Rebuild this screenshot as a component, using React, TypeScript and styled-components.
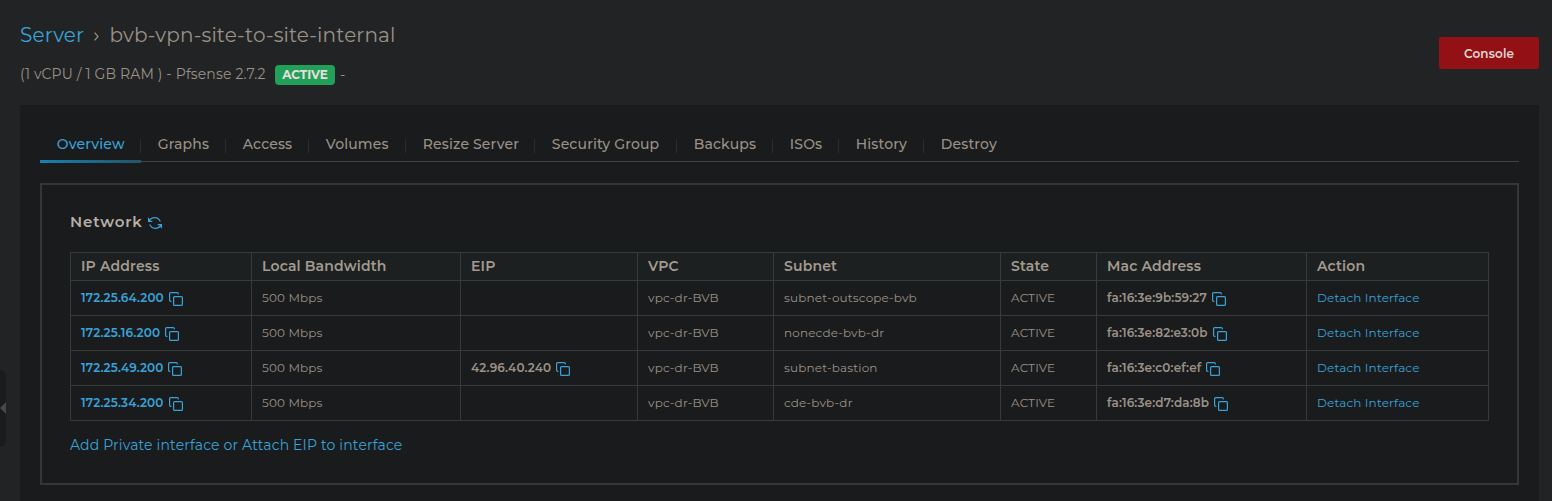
import React from 'react';
import styled, { createGlobalStyle } from 'styled-components';

const blue = '#38a3d8';

const Global = createGlobalStyle`
  * { box-sizing: border-box; }
  html, body { margin: 0; background: #222325; }
  body { font-family: Montserrat, Inter, sans-serif; color: #9b9287; overflow: hidden; }
`;
const Text = styled.span<{ $ls?: number }>`
  white-space: nowrap;
  letter-spacing: ${p => p.$ls ?? 0.15}px;
`;
const Page = styled.div`
  position: relative;
  height: 501px;
  padding: 0 13px 0 20px;
  display: flex;
  flex-direction: column;
  overflow: hidden;
`;
const Header = styled.header`
  height: 105px;
  flex: none;
  display: flex;
  justify-content: space-between;
`;
const Crumbs = styled.div`
  margin-top: 21px;
  height: 28px;
  display: flex;
  align-items: center;
  font-size: 20px;
  font-weight: 400;
`;
const CrumbLink = styled.a`width: 64px; color: ${blue};`;
const CrumbArrow = styled.svg`margin: 3px 10.5px 0 10px;`;
const Specs = styled.div`
  margin-top: 16px;
  height: 20px;
  display: flex;
  align-items: center;
  font-size: 14px;
`;
const SpecText = styled.div`width: 255px; margin-top: -2px;`;
const Badge = styled.span`
  width: 60px;
  height: 20px;
  margin-right: 5px;
  border-radius: 4px;
  background: #229f58;
  color: #e3e0dc;
  font-size: 12px;
  font-weight: 700;
  line-height: 20px;
  text-align: center;
`;
const ConsoleButton = styled.button`
  margin-top: 37px;
  width: 100px;
  height: 32px;
  padding: 0;
  border: 0;
  border-radius: 2px;
  background: #931114;
  color: #e0d6d3;
  font: 600 12px Montserrat, Inter, sans-serif;
`;
const Panel = styled.main`
  flex: 1;
  background: #1a1b1d;
  padding: 22px 20px 0;
`;
const Tabs = styled.nav`
  display: flex;
  height: 35px;
  border-bottom: 1px solid #414345;
`;
const Tab = styled.a<{ $w: number; $active?: boolean }>`
  position: relative;
  width: ${p => p.$w}px;
  height: 34px;
  padding-left: 16.8px;
  font-size: 14px;
  font-weight: 500;
  line-height: 34px;
  color: ${p => (p.$active ? blue : '#9b9287')};
  &:not(:last-child)::before {
    content: '';
    position: absolute;
    right: 0;
    top: 12px;
    width: 1px;
    height: 14px;
    background: #2b2c2e;
  }
  ${p => p.$active && `&::after {
    content: '';
    position: absolute;
    left: 0;
    top: 33px;
    width: 101px;
    height: 3px;
    background: linear-gradient(90deg, #1681b3, #245567);
  }`}
`;
const Card = styled.section`
  margin-top: 21px;
  height: 302px;
  border: 2px solid #353638;
  padding: 25px 28px 0;
`;
const CardTitle = styled.h2`
  display: flex;
  align-items: center;
  height: 22px;
  margin: 0 0 20px;
  font-size: 15px;
  font-weight: 600;
  color: #b8b1a8;
  svg { margin: 4px 0 0 0; }
`;
const TitleText = styled.span`width: 78px;`;
const Table = styled.table`
  width: 1418px;
  table-layout: fixed;
  border-collapse: collapse;
  th, td { border: 1px solid #363b3b; padding: 0 0 0 10px; text-align: left; }
  th { height: 28px; padding-bottom: 2px; background: #1c2020; font-size: 14px; font-weight: 600; color: #a39b90; line-height: 20px; }
  td { height: 35px; font-size: 12px; line-height: 20px; }
`;
const Cell = styled.div<{ $strong?: boolean; $link?: boolean }>`
  display: flex;
  align-items: center;
  gap: 5px;
  font-weight: ${p => (p.$strong ? 600 : 400)};
  color: ${p => (p.$link ? blue : '#9b9287')};
  svg { margin-top: 2px; }
`;
const AddLink = styled.a`
  display: block;
  margin-top: 14px;
  font-size: 14px;
  line-height: 20px;
  color: ${blue};
`;
const Handle = styled.div`
  position: absolute;
  left: 0;
  top: 370px;
  width: 6px;
  height: 77px;
  border-radius: 0 6px 6px 0;
  background: #1a1b1d;
  display: flex;
  align-items: center;
  padding-bottom: 1px;
`;

const Copy = () => (
  <svg width="14" height="14" viewBox="0 0 14 14" fill="none" stroke={blue} strokeWidth="1.2" strokeLinecap="round">
    <rect x="4.6" y="4.6" width="8.800" height="8.800" rx="1" />
    <path d="M2 9.300H1.600A1 1 0 0 1 .6 8.300V1.600A1 1 0 0 1 1.600.6h6.700a1 1 0 0 1 1 1V2" />
  </svg>
);
const Refresh = () => (
  <svg width="14" height="14" viewBox="0 0 14 14" fill="none" stroke={blue} strokeWidth="1.2">
    <path d="M.6 1.700v3.700h3.700M1 5.100C3.500.4 10.300.5 12.300 5.600M13.400 12.300V8.600H9.700M13 8.900C10.500 13.600 3.700 13.500 1.700 8.400" />
  </svg>
);

const tabs: [string, number][] = [
  ['Overview', 101], ['Graphs', 85], ['Access', 83], ['Volumes', 97], ['Resize Server', 129],
  ['Security Group', 142], ['Backups', 96], ['ISOs', 66], ['History', 85], ['Destroy', 90],
];
const cols: [string, number][] = [
  ['IP Address', 181], ['Local Bandwidth', 209], ['EIP', 177], ['VPC', 136],
  ['Subnet', 227], ['State', 96], ['Mac Address', 210], ['Action', 182],
];
const rows = [
  ['172.25.64.200', '', 'subnet-outscope-bvb', 'fa:16:3e:9b:59:27'],
  ['172.25.16.200', '', 'nonecde-bvb-dr', 'fa:16:3e:82:e3:0b'],
  ['172.25.49.200', '42.96.40.240', 'subnet-bastion', 'fa:16:3e:c0:ef:ef'],
  ['172.25.34.200', '', 'cde-bvb-dr', 'fa:16:3e:d7:da:8b'],
];

export default function App() {
  return (
    <>
      <Global />
      <Page>
        <Header>
          <div>
            <Crumbs>
              <CrumbLink><Text>Server</Text></CrumbLink>
              <CrumbArrow width="5" height="9" viewBox="0 0 5 9" fill="none" stroke="#9b9287" strokeWidth="1.2"><path d="M.6.700 4 4.500.6 8.300" /></CrumbArrow>
              <Text>bvb-vpn-site-to-site-internal</Text>
            </Crumbs>
            <Specs>
              <SpecText><Text>(1 vCPU / 1 GB RAM ) - Pfsense 2.7.2</Text></SpecText>
              <Badge><Text $ls={0}>ACTIVE</Text></Badge>
              <Text>-</Text>
            </Specs>
          </div>
          <ConsoleButton><Text>Console</Text></ConsoleButton>
        </Header>
        <Panel>
          <Tabs>
            {tabs.map(([t, w], i) => <Tab key={t} $w={w} $active={i === 0}><Text>{t}</Text></Tab>)}
          </Tabs>
          <Card>
            <CardTitle><TitleText><Text $ls={0.85}>Network</Text></TitleText><Refresh /></CardTitle>
            <Table>
              <colgroup>{cols.map(([n, w]) => <col key={n} width={w} />)}</colgroup>
              <thead><tr>{cols.map(([n]) => <th key={n}><Text>{n}</Text></th>)}</tr></thead>
              <tbody>
                {rows.map(([ip, eip, subnet, mac]) => (
                  <tr key={ip}>
                    <td><Cell $strong $link><Text>{ip}</Text><Copy /></Cell></td>
                    <td><Cell><Text>500 Mbps</Text></Cell></td>
                    <td>{eip && <Cell $strong><Text>{eip}</Text><Copy /></Cell>}</td>
                    <td><Cell><Text>vpc-dr-BVB</Text></Cell></td>
                    <td><Cell><Text>{subnet}</Text></Cell></td>
                    <td><Cell><Text>ACTIVE</Text></Cell></td>
                    <td><Cell $strong><Text>{mac}</Text><Copy /></Cell></td>
                    <td><Cell $link><Text>Detach Interface</Text></Cell></td>
                  </tr>
                ))}
              </tbody>
            </Table>
            <AddLink><Text>Add Private interface or Attach EIP to interface</Text></AddLink>
          </Card>
        </Panel>
        <Handle><svg width="6" height="12" viewBox="0 0 6 12"><path d="M6 0v12L0 6z" fill="#454949" /></svg></Handle>
      </Page>
    </>
  );
}
